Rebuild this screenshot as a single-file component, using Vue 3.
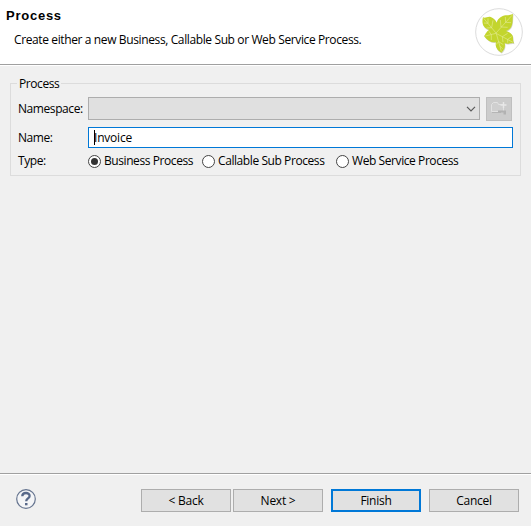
<script setup>
import { ref } from 'vue'

const name = ref('Invoice')
const type = ref('business')
const types = [
  { id: 'business', label: 'Business Process' },
  { id: 'sub', label: 'Callable Sub Process' },
  { id: 'web', label: 'Web Service Process' },
]
</script>

<template>
  <main class="wizard">
    <header class="head">
      <div class="titles">
        <h1>Process</h1>
        <p>Create either a new Business, Callable Sub or Web Service Process.</p>
      </div>
      <svg class="logo" viewBox="0 0 144 144">
        <circle cx="72" cy="72" r="70" fill="#fff" stroke="#dcdcdc" stroke-width="3" />
        <path fill="#a9ad8a" opacity=".5" transform="translate(1.5 2.5)" d="M24 28 C32 32 38 24 47 27 C56 30 61 36 65 44 C69 30 80 24 92 22 C100 22 107 21 114 18 C112 30 115 48 107 59 C103 64 98 67 93 69 C105 72 115 79 114 91 C114 97 115 101 117 106 C107 103 98 111 89 105 C92 117 87 127 79 134 C68 128 59 117 63 102 C52 105 38 100 27 84 C32 80 33 70 43 66 C25 60 19 47 24 28Z" />
        <path fill="#c3d52d" d="M24 28 C32 32 38 24 47 27 C56 30 61 36 65 44 C69 30 80 24 92 22 C100 22 107 21 114 18 C112 30 115 48 107 59 C103 64 98 67 93 69 C105 72 115 79 114 91 C114 97 115 101 117 106 C107 103 98 111 89 105 C92 117 87 127 79 134 C68 128 59 117 63 102 C52 105 38 100 27 84 C32 80 33 70 43 66 C25 60 19 47 24 28Z" />
        <path fill="none" stroke="#e6ed9e" stroke-width="1.7" d="M26 31L63 75L111 22M31 84L63 76L114 103M64 77L79 130M39 46L27 45M39 46L39 31M50 59L35 60M50 59L54 37M78 57L76 36M78 57L98 58M92 43L91 27M92 43L108 44M49 80L42 70M49 80L49 96M82 86L98 76M82 86L84 102M98 94L110 86M98 94L98 104M71 101L63 110M71 101L85 110M75 115L83 122" />
      </svg>
    </header>

    <section class="body">
      <div class="group">
        <span class="legend">Process</span>
        <div class="row namespace">
          <label>Namespace:</label>
          <div class="combo">
            <svg width="10" height="6" viewBox="0 0 10 6"><path d="M1 .8L5 4.8L9 .8" fill="none" stroke="#5a5a5a" stroke-width="1.2" /></svg>
          </div>
          <button class="folder" disabled aria-label="New namespace">
            <svg width="16" height="16" viewBox="0 0 16 16">
              <path d="M.5 10.5V3.5L2.5 1.5H6.5L7.5 3.5H12.5V10.5Z" fill="#cfcfcf" stroke="#e2e2e2" />
              <path d="M1 11.5H10" fill="none" stroke="#b5b5b5" />
              <path d="M7 9.5H15V13.5H12.5V11.5H7Z" fill="#b2b2b2" />
              <path d="M12.5 1V7M9.5 4H15.5" stroke="#e8e8e8" stroke-width="1.4" />
            </svg>
          </button>
        </div>
        <div class="row name">
          <label>Name:</label>
          <div class="field"><i class="caret"></i><span>{{ name }}</span></div>
        </div>
        <div class="row type">
          <label>Type:</label>
          <div v-for="t in types" :key="t.id" class="radio" :class="t.id" @click="type = t.id">
            <svg width="13" height="13" viewBox="0 0 13 13">
              <circle cx="6.5" cy="6.5" r="6" fill="#fff" stroke="#444" />
              <circle v-if="type === t.id" cx="6.5" cy="6.5" r="3.5" fill="#333" />
            </svg>
            <span>{{ t.label }}</span>
          </div>
        </div>
      </div>
    </section>

    <footer class="foot">
      <svg class="help" width="20" height="20" viewBox="0 0 20 20">
        <circle cx="10" cy="10" r="9.3" fill="#f4f5f7" stroke="#65748f" stroke-width="1.2" />
        <path d="M6.3 7.2C6.3 3 13.6 3 13.6 6.9C13.6 9.5 10.2 9.3 10.2 12.3" fill="none" stroke="#58698a" stroke-width="2.3" />
        <rect x="9" y="14" width="2.5" height="2.3" fill="#58698a" />
      </svg>
      <button class="btn back">&lt; Back</button>
      <button class="btn next">Next &gt;</button>
      <button class="btn finish">Finish</button>
      <button class="btn cancel">Cancel</button>
    </footer>
  </main>
</template>

<style>
body { margin: 0; }
</style>

<style scoped>
* { box-sizing: border-box; }
.wizard {
  width: 531px;
  height: 526px;
  display: flex;
  flex-direction: column;
  background: #f0f0f0;
  color: #000;
  font: 12px/16px "Open Sans", "Noto Sans", sans-serif;
  letter-spacing: -.42px;
  white-space: nowrap;
  overflow: hidden;
}
.head {
  height: 66px;
  flex: none;
  display: flex;
  justify-content: space-between;
  padding: 8px 8px 0 6px;
  background: #fff;
  border-bottom: 1px solid #fff;
  box-shadow: inset 0 -1px #a0a0a0;
}
h1 { margin: 0; font: bold 13px/16px "Liberation Sans", Arial, sans-serif; letter-spacing: .75px; }
p { margin: 8px 0 0 8px; letter-spacing: -.38px; }
.logo { width: 48px; height: 48px; }
.body { flex: 1; padding: 17px 10px 0; }
.group {
  height: 93px;
  padding: 0 7px;
  border: 1px solid #dcdcdc;
}
.legend {
  display: block;
  width: 44px;
  height: 16px;
  margin: -8px 0 0 -1px;
  padding-left: 2px;
  background: #f0f0f0;
}
.row { display: flex; align-items: center; }
.row label { width: 70px; flex: none; }
.namespace { height: 24px; margin-top: 5px; }
.combo {
  width: 392px;
  height: 23px;
  align-self: flex-start;
  display: flex;
  align-items: center;
  justify-content: flex-end;
  padding-right: 3px;
  background: #e0e0e0;
  border: 1px solid #adadad;
}
.folder {
  width: 26px;
  height: 24px;
  margin-left: 6px;
  padding: 0;
  display: flex;
  align-items: center;
  justify-content: center;
  background: #ccc;
  border: 1px solid #bfbfbf;
}
.name { height: 21px; margin-top: 6px; }
.field {
  width: 425px;
  height: 21px;
  flex: none;
  display: flex;
  align-items: center;
  padding-left: 5px;
  background: #fff;
  border: 1px solid #0078d7;
}
.caret { width: 1px; height: 15px; margin-right: -1px; background: #000; }
.field span { letter-spacing: -.2px; }
.type { height: 16px; margin-top: 5px; }
.radio { display: flex; align-items: center; gap: 3px; flex: none; }
.radio.business { width: 114px; }
.radio.sub { width: 134px; }
.foot {
  height: 53px;
  flex: none;
  display: flex;
  padding: 15px 12px 0 16px;
  border-top: 1px solid #a0a0a0;
  box-shadow: inset 0 1px #fff;
}
.help { margin-right: 105px; }
.btn {
  width: 90px;
  height: 23px;
  padding: 0;
  background: #e1e1e1;
  border: 1px solid #adadad;
  border-radius: 0;
  color: #000;
  font: inherit;
  letter-spacing: -.25px;
}
.next { margin-left: 2px; }
.finish { margin-left: 8px; border: 2px solid #0078d7; }
.cancel { margin-left: 8px; }
</style>
